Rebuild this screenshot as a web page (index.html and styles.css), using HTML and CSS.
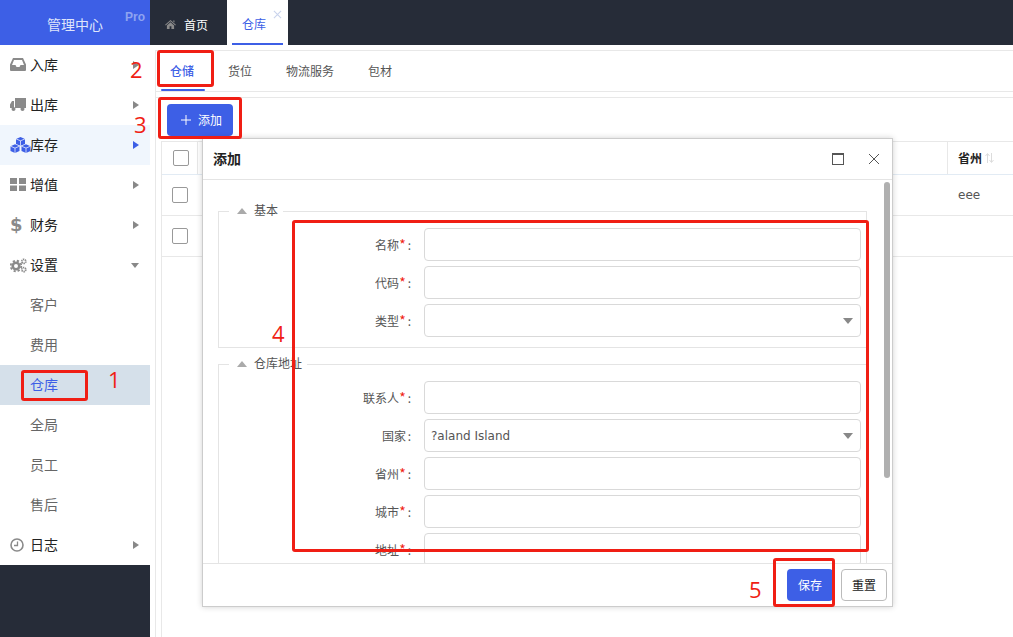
FILE: index.html
```html
<!DOCTYPE html>
<html lang="zh-CN">
<head>
<meta charset="utf-8">
<title>仓库</title>
<link rel="stylesheet" href="styles.css">
</head>
<body>
<div class="app">
  <header class="topbar">
    <div class="brand"><span class="brand-name">管理中心</span><span class="brand-pro">Pro</span></div>
    <div class="tab-home">
      <svg class="home-icon" viewBox="0 0 12 10"><path d="M6 0 12 5.2 11.3 6 6 1.5.7 6 0 5.2zM2 6l4-3.4L10 6v4H7V7H5v3H2zM9 .6h1.4v2.2L9 1.6z"/></svg>
      <span>首页</span>
    </div>
    <div class="tab-active">
      <span class="tab-active-label">仓库</span>
      <svg class="tab-close" viewBox="0 0 10 10"><path d="M1 1l8 8M9 1 1 9"/></svg>
    </div>
  </header>
  <div class="content">
    <nav class="sidebar">
      <div class="nav-item">
        <svg class="nav-icon" viewBox="0 0 16 13"><path fill-rule="evenodd" d="M3 0h10l3 6.500V12a1 1 0 0 1-1 1H1a1 1 0 0 1-1-1V6.500zM4 2 2 7h3.500l1 2h3l1-2H14l-2-5z"/></svg>
        <span>入库</span><i class="arrow-right"></i>
      </div>
      <div class="nav-item">
        <svg class="nav-icon" viewBox="0 0 16 13"><path d="M5 0h11v10H5zM4 3v7H0V6.500L2 3z"/><circle cx="3.500" cy="11" r="2"/><circle cx="12.500" cy="11" r="2"/></svg>
        <span>出库</span><i class="arrow-right"></i>
      </div>
      <div class="nav-item nav-item-open">
        <svg class="nav-icon nav-icon-blue" viewBox="0 0 21 16"><path d="M10.500 0 15 1.900v5l-4.500 1.900L6 6.900v-5zM5 7.300l4.500 1.900v4.900L5 16 .5 14.100V9.200zM16 7.300l4.500 1.900v4.900L16 16l-4.500-1.900V9.200z"/><path class="cube-line" d="M6 1.900l4.500 1.900L15 1.900M10.500 3.800v5M.5 9.200 5 11.100l4.500-1.900M5 11.100V16M11.500 9.200l4.500 1.900 4.500-1.900M16 11.100V16"/></svg>
        <span>库存</span><i class="arrow-right arrow-blue"></i>
      </div>
      <div class="nav-item">
        <svg class="nav-icon" viewBox="0 0 16 13"><path d="M0 0h7v6H0zM9 0h7v6H9zM0 7.500h7V13H0zM9 7.500h7V13H9z"/></svg>
        <span>增值</span><i class="arrow-right"></i>
      </div>
      <div class="nav-item">
        <span class="dollar">$</span>
        <span>财务</span><i class="arrow-right"></i>
      </div>
      <div class="nav-item">
        <svg class="nav-icon nav-icon-cogs" viewBox="0 0 17 15"><circle class="gear-ring" cx="6" cy="8" r="3.300"/><circle class="gear-teeth" cx="6" cy="8" r="5.300"/><circle class="gear-small" cx="13.800" cy="3.400" r="2"/><circle class="gear-small" cx="13.800" cy="11.600" r="2"/></svg>
        <span>设置</span><i class="arrow-down"></i>
      </div>
      <div class="nav-sub"><span>客户</span></div>
      <div class="nav-sub"><span>费用</span></div>
      <div class="nav-sub nav-sub-active"><span>仓库</span></div>
      <div class="nav-sub"><span>全局</span></div>
      <div class="nav-sub"><span>员工</span></div>
      <div class="nav-sub"><span>售后</span></div>
      <div class="nav-item">
        <svg class="nav-icon nav-icon-clock" viewBox="0 0 14 14"><circle class="clock-ring" cx="7" cy="7" r="6"/><path class="clock-hand" d="M7.500 3.500v4H4"/></svg>
        <span>日志</span><i class="arrow-right"></i>
      </div>
    </nav>
    <main class="main">
      <div class="subtabs">
        <span class="subtab subtab-active">仓储</span>
        <span class="subtab">货位</span>
        <span class="subtab">物流服务</span>
        <span class="subtab">包材</span>
      </div>
      <div class="toolbar">
        <button class="btn btn-primary btn-add"><svg class="plus" viewBox="0 0 10 10"><path d="M5 0v10M0 5h10"/></svg><span>添加</span></button>
      </div>
      <div class="table">
        <div class="row row-head">
          <div class="cell-check cell-check-head"><i class="checkbox"></i></div>
          <div class="cell-fill"></div>
          <div class="cell-last cell-last-head">省州<svg class="sort" viewBox="0 0 9 10"><path d="M2.500 10V1M.5 3l2-2.500 2 2.500M6.500 0v9M4.500 7l2 2.500 2-2.500"/></svg></div>
        </div>
        <div class="row row-body">
          <div class="cell-check"><i class="checkbox"></i></div>
          <div class="cell-fill"></div>
          <div class="cell-last">eee</div>
        </div>
        <div class="row row-body">
          <div class="cell-check"><i class="checkbox"></i></div>
          <div class="cell-fill"></div>
          <div class="cell-last"></div>
        </div>
      </div>
    </main>
  </div>

  <section class="modal">
    <div class="modal-head">
      <span class="modal-title">添加</span>
      <i class="modal-max"></i>
      <svg class="modal-close" viewBox="0 0 10 10"><path d="M0 0l10 10M10 0 0 10"/></svg>
    </div>
    <div class="modal-body">
      <fieldset class="group group-first">
        <legend class="group-legend"><i class="arrow-up"></i><span class="legend-text">基本</span></legend>
        <div class="field"><label class="field-label">名称<em>*</em><span class="colon">:</span></label><div class="input"></div></div>
        <div class="field"><label class="field-label">代码<em>*</em><span class="colon">:</span></label><div class="input"></div></div>
        <div class="field"><label class="field-label">类型<em>*</em><span class="colon">:</span></label><div class="input input-select"><i class="select-arrow"></i></div></div>
      </fieldset>
      <fieldset class="group">
        <legend class="group-legend"><i class="arrow-up"></i><span class="legend-text">仓库地址</span></legend>
        <div class="field"><label class="field-label">联系人<em>*</em><span class="colon">:</span></label><div class="input"></div></div>
        <div class="field"><label class="field-label">国家<span class="colon">:</span></label><div class="input input-select"><span>?aland Island</span><i class="select-arrow"></i></div></div>
        <div class="field"><label class="field-label">省州<em>*</em><span class="colon">:</span></label><div class="input"></div></div>
        <div class="field"><label class="field-label">城市<em>*</em><span class="colon">:</span></label><div class="input"></div></div>
        <div class="field"><label class="field-label">地址<em>*</em><span class="colon">:</span></label><div class="input"></div></div>
      </fieldset>
      <div class="scroll-thumb"></div>
    </div>
    <div class="modal-foot">
      <button class="btn btn-primary btn-foot">保存</button>
      <button class="btn btn-plain btn-foot">重置</button>
    </div>
  </section>

  <div class="mark mark-1"></div><span class="num num-1">1</span>
  <div class="mark mark-2"></div><span class="num num-2">2</span>
  <div class="mark mark-3"></div><span class="num num-3">3</span>
  <div class="mark mark-4"></div><span class="num num-4">4</span>
  <div class="mark mark-5"></div><span class="num num-5">5</span>
</div>
</body>
</html>
```

FILE: styles.css
```css
* { box-sizing: border-box; }
html, body { margin: 0; height: 100%; overflow: hidden; background: #fff; }
body { font-family: "Noto Sans CJK SC", "Noto Sans", sans-serif; font-size: 12px; color: #555; }
.app { position: relative; width: 1013px; height: 637px; display: flex; flex-direction: column; }

.topbar { height: 45px; display: flex; background: #262c38; flex: none; }
.brand { position: relative; width: 150px; background: #3d5fe6; color: #dfe5fb; font-size: 14px; line-height: 48px; padding-left: 47px; }
.brand-pro { position: absolute; left: 125px; top: 10px; font: bold 12px/14px "Liberation Sans", sans-serif; color: #8fa3f0; }
.tab-home { width: 77px; display: flex; align-items: center; padding: 3px 0 0 15px; color: #fff; }
.home-icon { width: 11px; height: 9px; margin-right: 8px; fill: #8a8a8a; }
.tab-active { position: relative; width: 61px; background: #fff; color: #3d5fe6; display: flex; justify-content: center; }
.tab-active-label { width: 51px; height: 45px; line-height: 48px; padding-left: 10px; border-bottom: 2px solid #3d5fe6; }
.tab-close { position: absolute; right: 6px; top: 10px; width: 9px; height: 9px; fill: none; stroke: #c9d3ec; stroke-width: 1.200; }

.content { flex: 1; display: flex; min-height: 0; }
.sidebar { width: 150px; flex: none; background: #262c38; }
.nav-item, .nav-sub { height: 40px; background: #fff; display: flex; align-items: center; font-size: 14px; padding-bottom: 2px; }
.nav-item { position: relative; color: #222; padding-left: 30px; }
.nav-item-open { background: #f0f6fd; }
.nav-sub { padding-left: 30px; color: #666; }
.nav-sub-active { background: #d5e0ea; color: #3d5fe6; }
.nav-icon { position: absolute; left: 10px; top: 13px; width: 16px; height: 13px; fill: #8a8a8a; }
.nav-icon-blue { width: 21px; height: 16px; top: 12px; fill: #3d5fe6; }
.nav-icon-cogs { width: 17px; height: 15px; top: 13px; }
.nav-icon-clock { width: 14px; height: 14px; }
.cube-line { fill: none; stroke: #fff; stroke-width: .7; }
.gear-ring { fill: none; stroke: #8a8a8a; stroke-width: 2.600; }
.gear-teeth { fill: none; stroke: #8a8a8a; stroke-width: 1.800; stroke-dasharray: 2.200 2; }
.gear-small { fill: none; stroke: #8a8a8a; stroke-width: 1.800; stroke-dasharray: 1.300 .6; }
.clock-ring { fill: none; stroke: #8a8a8a; stroke-width: 1.600; }
.clock-hand { fill: none; stroke: #8a8a8a; stroke-width: 1.300; }
.dollar { position: absolute; left: 10px; top: 9px; font: bold 18px/22px "DejaVu Sans", sans-serif; color: #8a8a8a; }
.arrow-right { position: absolute; left: 133px; top: 16px; width: 0; height: 0; border-style: solid; border-width: 4px 0 4px 6px; border-color: transparent transparent transparent #888; }
.arrow-blue { border-left-color: #3d5fe6; }
.arrow-down { position: absolute; left: 131px; top: 18px; width: 0; height: 0; border-style: solid; border-width: 5px 4px 0; border-color: #888 transparent transparent; }

.main { flex: 1; min-width: 0; margin: 5px 0 0 5px; border-left: 1px solid #e8e8e8; display: flex; flex-direction: column; border-top: 1px solid #e8e8e8; }
.subtabs { height: 41px; border-bottom: 1px solid #e8e8e8; display: flex; gap: 34px; padding-left: 14px; flex: none; }
.subtab { position: relative; line-height: 39px; color: #555; }
.subtab-active { color: #3d5fe6; font-weight: 500; }
.subtab-active::after { content: ""; position: absolute; left: -9px; right: -11px; bottom: 0; height: 2px; background: #3d5fe6; border-radius: 1px; }
.toolbar { margin-top: 5px; border-top: 1px solid #e8e8e8; padding: 6px 11px 5px; flex: none; }
.btn { display: block; font-family: inherit; font-size: 12px; padding: 0 0 2px; height: 32px; border-radius: 4px; cursor: pointer; }
.btn-primary { background: #3d5fe6; color: #fff; border: 0; }
.btn-plain { background: #fff; color: #222; border: 1px solid #bbb; }
.btn-add { width: 66px; display: flex; align-items: center; padding-left: 14px; }
.plus { width: 10px; height: 10px; margin: 2px 7px 0 0; fill: none; stroke: #fff; stroke-width: 1; }
.table { flex: 1; margin-left: 5px; border-left: 1px solid #e8e8e8; }
.row { display: flex; border-bottom: 1px solid #e8e8e8; }
.row-head { height: 34px; border-top: 1px solid #e8e8e8; border-bottom-color: #e2ebf4; }
.row-body { height: 41px; }
.cell-check { width: 36px; padding-left: 10px; display: flex; align-items: center; flex: none; }
.cell-check-head { padding-left: 11px; border-right: 1px solid #e8e8e8; }
.cell-fill { flex: 1; }
.cell-last { width: 66px; padding-left: 11px; display: flex; align-items: center; font-family: "DejaVu Sans", sans-serif; color: #555; flex: none; }
.cell-last-head { padding-left: 10px; padding-bottom: 2px; border-left: 1px solid #e8e8e8; font-family: "Noto Sans CJK SC", sans-serif; font-weight: 700; color: #222; }
.sort { width: 9px; height: 10px; margin: 2px 0 0 3px; fill: none; stroke: #dcdcdc; stroke-width: 1; }
.checkbox { display: block; width: 16px; height: 16px; border: 1px solid #999; border-radius: 2px; background: #fff; }

.modal { position: absolute; left: 202px; top: 138px; width: 691px; height: 469px; background: #fff; border: 1px solid #ccc; box-shadow: 0 0 6px rgba(0,0,0,.18); display: flex; flex-direction: column; }
.modal-head { position: relative; height: 41px; flex: none; border-bottom: 1px solid #e4e4e4; padding-left: 10px; }
.modal-title { font-size: 14px; font-weight: 700; color: #222; line-height: 38px; display: block; }
.modal-max { position: absolute; left: 629px; top: 14px; width: 12px; height: 12px; border: 1px solid #555; border-top-width: 2px; }
.modal-close { position: absolute; left: 666px; top: 15px; width: 10px; height: 10px; fill: none; stroke: #555; stroke-width: 1; }
.modal-body { position: relative; flex: 1; min-height: 0; overflow: hidden; padding: 23px 25px 0 15px; }
.group { margin: 8px 0 0; padding: 9px 5px 10px 0; border: 1px solid #e4e4e4; min-width: 0; }
.group-first { margin-top: 0; }
.group-legend { margin-left: 10px; padding: 0 5px 0 8px; height: 16px; color: #555; display: flex; align-items: center; }
.legend-text { line-height: 14px; margin-bottom: 2px; }
.arrow-up { width: 0; height: 0; margin-right: 7px; border-style: solid; border-width: 0 5px 6px; border-color: transparent transparent #aaa; }
.field { display: flex; height: 33px; margin-bottom: 5px; }
.field:last-child { margin-bottom: 0; }
.field-label { width: 194px; text-align: right; line-height: 33px; color: #555; flex: none; margin-right: 11px; padding-right: 1px; }
.field-label em { display: inline-block; width: 7px; height: 12px; line-height: 14px; font-size: 14px; text-align: center; color: #f01e14; font-style: normal; }
.colon { display: inline-block; width: 6px; text-align: right; padding-right: 1px; }
.input { position: relative; flex: 1; border: 1px solid #d9d9d9; border-radius: 4px; padding-left: 6px; line-height: 33px; font-family: "DejaVu Sans", sans-serif; color: #555; }
.select-arrow { position: absolute; right: 7px; top: 13px; width: 0; height: 0; border-style: solid; border-width: 6px 5px 0; border-color: #888 transparent transparent; }
.scroll-thumb { position: absolute; left: 681px; top: 2px; width: 6px; height: 296px; background: #b0b0b0; border-radius: 3px; }
.modal-foot { height: 43px; flex: none; border-top: 1px solid #e4e4e4; background: #fff; display: flex; justify-content: flex-end; gap: 8px; padding: 5px 5px 0 0; }
.btn-foot { width: 46px; }

.mark { position: absolute; border: 3px solid #f01e14; border-radius: 3px; }
.mark-1 { left: 21px; top: 370px; width: 67px; height: 31px; }
.mark-2 { left: 157px; top: 50px; width: 57px; height: 37px; }
.mark-3 { left: 158px; top: 97px; width: 84px; height: 42px; }
.mark-4 { left: 292px; top: 220px; width: 577px; height: 332px; }
.mark-5 { left: 773px; top: 558px; width: 62px; height: 49px; }
.num { position: absolute; font: 22px/24px "Open Sans", sans-serif; color: #f01e14; }
.num-1 { left: 108px; top: 367px; }
.num-2 { left: 130px; top: 57px; }
.num-3 { left: 134px; top: 112px; }
.num-4 { left: 272px; top: 321px; }
.num-5 { left: 749px; top: 577px; }
```
